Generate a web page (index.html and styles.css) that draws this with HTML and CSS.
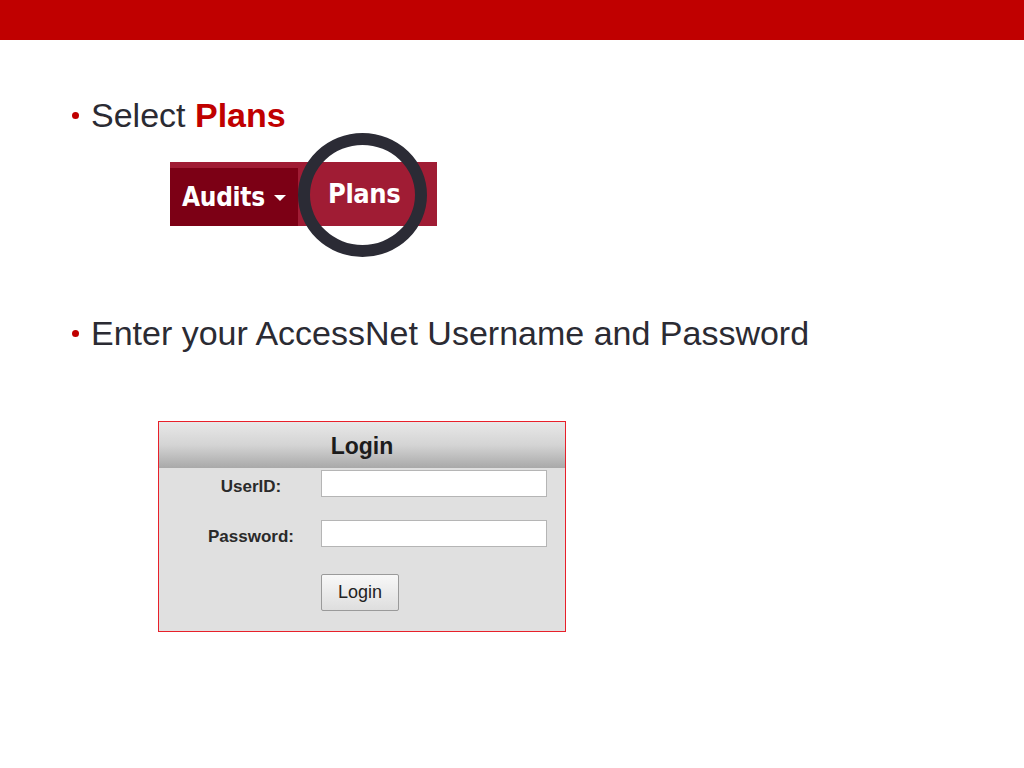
FILE: index.html
```html
<!DOCTYPE html>
<html>
<head>
<meta charset="utf-8">
<link rel="stylesheet" href="styles.css">
</head>
<body>
<div class="topbar"></div>
<main class="slide">
  <div class="bullet first">
    <span class="dot"></span>
    <span class="btext">Select <b class="accent">Plans</b></span>
  </div>
  <div class="navshot">
    <div class="navrow">
      <div class="nav-audits">Audits<span class="caret"></span></div>
      <div class="nav-plans">Plans</div>
    </div>
    <div class="ring"></div>
  </div>
  <div class="bullet second">
    <span class="dot"></span>
    <span class="btext">Enter your AccessNet Username and Password</span>
  </div>
  <div class="login">
    <div class="login-head">Login</div>
    <div class="login-body">
      <div class="row">
        <label class="lbl">UserID:</label>
        <div class="field"></div>
      </div>
      <div class="row">
        <label class="lbl">Password:</label>
        <div class="field"></div>
      </div>
      <div class="row btnrow">
        <span class="lbl"></span>
        <div class="btn">Login</div>
      </div>
    </div>
  </div>
</main>
</body>
</html>
```

FILE: styles.css
```css
html, body {
  margin: 0;
  padding: 0;
  background: #ffffff;
  font-family: "Liberation Sans", Arial, sans-serif;
}
.topbar {
  height: 40px;
  background: #c00000;
}
.slide {
  padding-left: 72px;
}
.bullet {
  display: flex;
  align-items: center;
  color: #2b2b33;
  font-size: 34px;
  line-height: 40px;
}
.bullet.first {
  margin-top: 55px;
}
.bullet.second {
  margin-top: 87px;
}
.dot {
  width: 7px;
  height: 7px;
  border-radius: 50%;
  background: #c00000;
  margin-right: 12px;
  margin-top: 1px;
  flex: none;
}
.accent {
  color: #c00000;
  font-weight: bold;
}
.navshot {
  position: relative;
  margin-left: 98px;
  margin-top: 27px;
  width: 267px;
  height: 64px;
  background: #a01c34;
}
.navrow {
  display: flex;
  height: 64px;
}
.nav-audits {
  align-self: flex-end;
  width: 128px;
  height: 58px;
  background: #7c0015;
  color: #fff;
  font-family: "DejaVu Sans Condensed", "DejaVu Sans", sans-serif;
  font-weight: bold;
  font-size: 26px;
  display: flex;
  align-items: center;
  padding-left: 12px;
  box-sizing: border-box;
  letter-spacing: -0.3px;
}
.caret {
  display: inline-block;
  width: 0;
  height: 0;
  border-left: 6px solid transparent;
  border-right: 6px solid transparent;
  border-top: 6px solid #fff;
  margin-left: 9px;
  margin-top: 2px;
}
.nav-plans {
  color: #fff;
  font-family: "DejaVu Sans Condensed", "DejaVu Sans", sans-serif;
  font-weight: bold;
  font-size: 27px;
  display: flex;
  align-items: center;
  padding-left: 30px;
  padding-bottom: 2px;
  letter-spacing: -0.4px;
}
.ring {
  position: absolute;
  left: 128px;
  top: -29px;
  width: 105px;
  height: 100px;
  border: 12px solid #2b2b35;
  border-radius: 50%;
}
.login {
  margin-left: 86px;
  margin-top: 68px;
  width: 406px;
  border: 1px solid #e8202a;
  background: #e0e0e0;
}
.login-head {
  height: 46px;
  line-height: 48px;
  text-align: center;
  font-weight: bold;
  font-size: 23px;
  color: #1c1c1c;
  background: linear-gradient(#e8e8e8 0%, #d4d4d4 50%, #a9a9a9 100%);
}
.login-body {
  padding: 2px 0 20px 0;
}
.row {
  display: flex;
  align-items: center;
  margin-bottom: 23px;
}
.row:last-child {
  margin-bottom: 0;
}
.btnrow {
  margin-top: 27px;
}
.lbl {
  width: 184px;
  text-align: center;
  font-weight: bold;
  font-size: 17px;
  color: #2a2a2a;
  padding-top: 6px;
}
.field {
  margin-left: -22px;
  width: 224px;
  height: 25px;
  background: #fff;
  border: 1px solid #b5b5b5;
}
.btn {
  margin-left: -22px;
  width: 76px;
  height: 35px;
  line-height: 35px;
  text-align: center;
  font-size: 18px;
  color: #222;
  border: 1px solid #9a9a9a;
  border-radius: 2px;
  background: linear-gradient(#f8f8f8, #dedede);
}
```
